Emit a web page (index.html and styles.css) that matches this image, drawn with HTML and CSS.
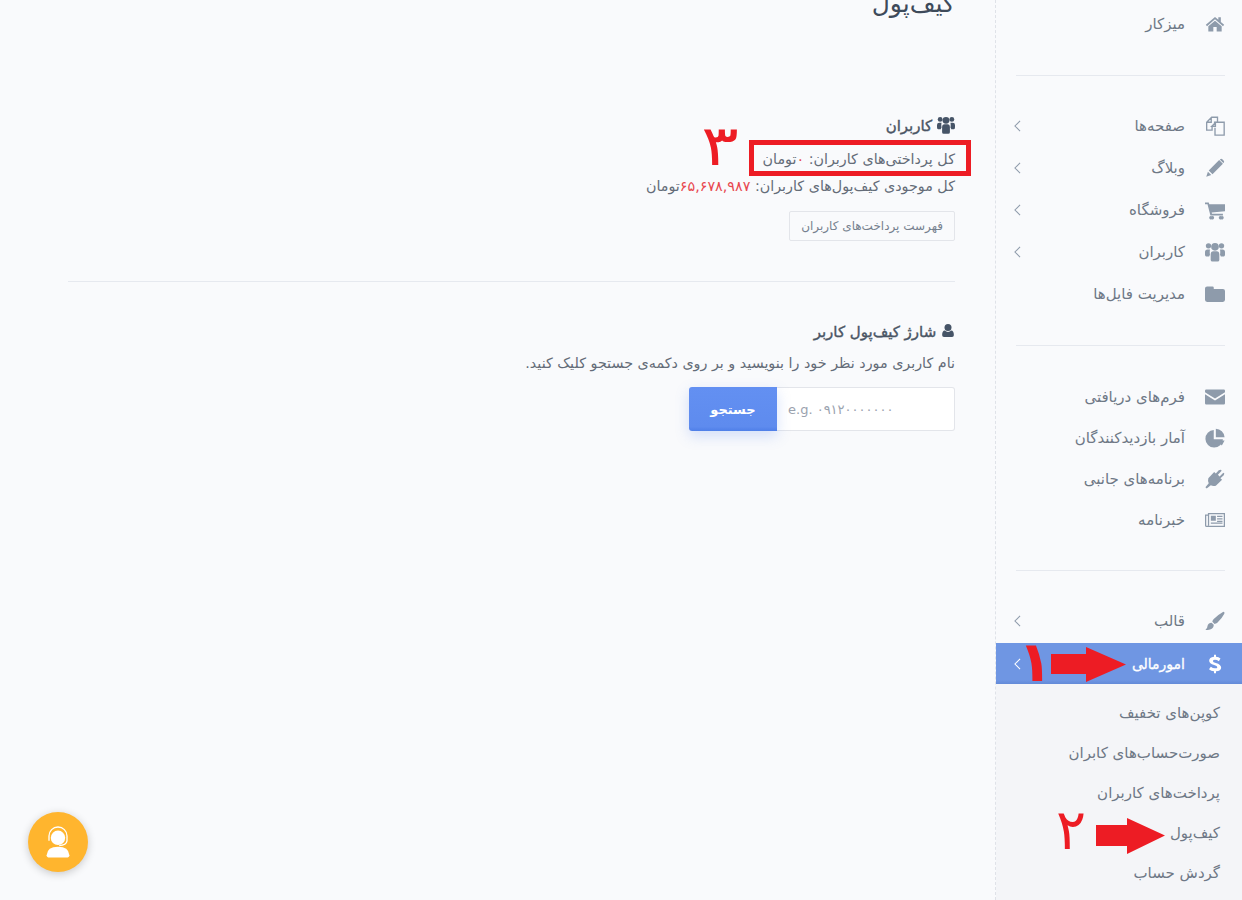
FILE: index.html
```html
<!DOCTYPE html>
<html lang="fa" dir="rtl">
<head>
    <meta charset="UTF-8">
    <title>کیف‌پول</title>
    <link rel="stylesheet" href="styles.css">
</head>
<body>
    <svg class="sprite" xmlns="http://www.w3.org/2000/svg">
        <symbol id="i-home" viewBox="0 0 24 24"><path d="M12 3.5 L1 13 L2.4 14.6 L12 6.4 L21.6 14.6 L23 13 L19 9.5 V4 H16 V6.9 Z M12 8 L4 14.8 V21 H10 V15.5 H14 V21 H20 V14.8 Z"/></symbol>
        <symbol id="i-files" viewBox="0 0 24 24"><path fill="none" stroke="currentColor" stroke-width="1.6" d="M11.5 11 V7.5 L16 7.5 H23 V23 H12 V14 M12.5 8 L8 12.5 H12.5 Z M15 7 V1.5 H8 L2 7.5 V17 H8.5 L8.5 12.5 M7.5 2 V7.5 H2.5"/></symbol>
        <symbol id="i-pencil" viewBox="0 0 24 24"><path d="M17 2.5 L21.5 7 L9 19.5 L4.5 15 Z M3.5 16.5 L7.5 20.5 L1.5 22.5 Z M18.2 1.5 Q19.5 .5 20.8 1.5 L22.5 3.2 Q23.5 4.5 22.5 5.8 L22 6 L18 2 Z"/></symbol>
        <symbol id="i-cart" viewBox="0 0 24 24"><path d="M0 3 H4.5 L5.2 5 H24 V13.5 L8 15 L8.4 16.5 H21.5 V18.5 H6.5 L3 5 H0 Z M8 19.5 A2 2 0 1 1 8 23 A2 2 0 1 1 8 19.5 Z M19.5 19.5 A2 2 0 1 1 19.5 23 A2 2 0 1 1 19.5 19.5 Z"/></symbol>
        <symbol id="i-users" viewBox="0 0 24 24"><circle cx="4.2" cy="4.6" r="3.2"/><circle cx="19.8" cy="4.6" r="3.2"/><circle cx="12" cy="5.8" r="4.6"/><path d="M0 15 V12 Q0 9 3 9 H6 Q5.4 12 6 15.5 Q5 16.5 5 17.5 H1.5 Q0 17.5 0 15 Z M24 15 V12 Q24 9 21 9 H18 Q18.6 12 18 15.5 Q19 16.5 19 17.5 H22.5 Q24 17.5 24 15 Z M6.8 21.5 V15 Q6.8 11 10 11 H14 Q17.2 11 17.2 15 V21.5 Q17.2 23.5 15 23.5 H9 Q6.8 23.5 6.8 21.5 Z"/></symbol>
        <symbol id="i-folder" viewBox="0 0 24 24"><path d="M2.5 3 H9 Q10.5 3 10.5 4.5 V6 H21.5 Q24 6 24 8.5 V19 Q24 21.5 21.5 21.5 H2.5 Q0 21.5 0 19 V5.5 Q0 3 2.5 3 Z"/></symbol>
        <symbol id="i-envelope" viewBox="0 0 24 24"><path d="M1.5 3 H22.5 Q24 3 24 4.5 V6.2 L12 13.8 L0 6.2 V4.5 Q0 3 1.5 3 Z M0 8.6 L12 16.2 L24 8.6 V19.5 Q24 21 22.5 21 H1.5 Q0 21 0 19.5 Z"/></symbol>
        <symbol id="i-pie" viewBox="0 0 24 24"><path d="M10.5 2.5 V13.5 H21.5 A10.5 10.5 0 1 1 10.5 2.5 Z M13 .8 A11 11 0 0 1 23.5 11 H13 Z M14.5 15 H23.5 L20.2 21 Z"/></symbol>
        <symbol id="i-plug" viewBox="0 0 24 24"><path d="M16.5 1.5 L19 .8 L20 2 L15.5 7 L17.5 9 L22 4.5 L23.2 5.5 L22.5 7.5 L18.5 11 L20.5 13 L13 20 Q9.5 21 7 19.5 L2 23.5 L.5 22 L4.5 17 Q3 14.5 4 11 L11 3.5 L13 5.5 Z"/></symbol>
        <symbol id="i-news" viewBox="0 0 24 24"><path fill-rule="evenodd" d="M3.5 3.5 H24 V20.5 H2 Q0 20.5 0 18.5 V5.5 H3.5 Z M5 5 V18 Q5 19 4 19 H22.5 V5 Z M1.5 7 V18.5 Q1.5 19 2.5 19 Q3.5 19 3.5 18.5 V7 Z M7 7 H13 V13 H7 Z M14.5 7 H21 V8.5 H14.5 Z M14.5 10 H21 V11.5 H14.5 Z M14.5 13 H21 V14.5 H14.5 Z M7 15 H21 V16.5 H7 Z"/></symbol>
        <symbol id="i-brush" viewBox="0 0 24 24"><path d="M22 .8 Q24 1 23.2 3.2 Q20.5 8.5 14.5 14.5 Q13 15.5 11.5 15.5 L8.8 12.8 Q9 11 10.5 9.5 Q17 3.5 22 .8 Z M8 14 L10.5 16.5 Q10.5 20.5 7 22 Q3.5 23.5 .5 22.5 Q3 21 3 18 Q3.5 14.5 8 14 Z"/></symbol>
        <symbol id="i-usd" viewBox="0 0 24 24"><path d="M10.8 1 H13.2 V3.4 Q16.6 3.8 18.6 5.4 L16.6 8.6 Q14.4 7 12 7 Q9.5 7 9.5 8.6 Q9.5 9.8 13 10.8 Q19.4 12.6 19.4 16.4 Q19.4 20 13.2 20.8 V23 H10.8 V20.8 Q7.2 20.4 4.8 18.2 L7 15.2 Q9.4 17.2 12 17.2 Q14.8 17.2 14.8 15.8 Q14.8 14.4 11 13.2 Q5 11.4 5 8 Q5 4.2 10.8 3.4 Z"/></symbol>
        <symbol id="i-user" viewBox="0 0 24 24"><circle cx="12" cy="7" r="6"/><path d="M6.5 12 Q9 14.5 12 14.5 Q15 14.5 17.5 12 Q22 12.5 22 19 V20 Q22 23 19 23 H5 Q2 23 2 20 V19 Q2 12.5 6.5 12 Z"/></symbol>
    </svg>

    <div class="layout">
        <aside class="sidebar">
            <ul class="menu menu-first">
                <li class="menu-item"><svg class="icon"><use href="#i-home"/></svg><span>میزکار</span></li>
            </ul>
            <ul class="menu">
                <li class="menu-item"><svg class="icon"><use href="#i-files"/></svg><span>صفحه‌ها</span><svg class="chevron" viewBox="0 0 8 14"><path d="M7 1 L1 7 L7 13"/></svg></li>
                <li class="menu-item"><svg class="icon"><use href="#i-pencil"/></svg><span>وبلاگ</span><svg class="chevron" viewBox="0 0 8 14"><path d="M7 1 L1 7 L7 13"/></svg></li>
                <li class="menu-item"><svg class="icon"><use href="#i-cart"/></svg><span>فروشگاه</span><svg class="chevron" viewBox="0 0 8 14"><path d="M7 1 L1 7 L7 13"/></svg></li>
                <li class="menu-item"><svg class="icon"><use href="#i-users"/></svg><span>کاربران</span><svg class="chevron" viewBox="0 0 8 14"><path d="M7 1 L1 7 L7 13"/></svg></li>
                <li class="menu-item"><svg class="icon"><use href="#i-folder"/></svg><span>مدیریت فایل‌ها</span></li>
            </ul>
            <ul class="menu menu-tight">
                <li class="menu-item"><svg class="icon"><use href="#i-envelope"/></svg><span>فرم‌های دریافتی</span></li>
                <li class="menu-item"><svg class="icon"><use href="#i-pie"/></svg><span>آمار بازدیدکنندگان</span></li>
                <li class="menu-item"><svg class="icon"><use href="#i-plug"/></svg><span>برنامه‌های جانبی</span></li>
                <li class="menu-item"><svg class="icon"><use href="#i-news"/></svg><span>خبرنامه</span></li>
            </ul>
            <ul class="menu menu-last">
                <li class="menu-item"><svg class="icon"><use href="#i-brush"/></svg><span>قالب</span><svg class="chevron" viewBox="0 0 8 14"><path d="M7 1 L1 7 L7 13"/></svg></li>
                <li class="menu-item active"><svg class="icon"><use href="#i-usd"/></svg><span>امورمالی</span><svg class="chevron" viewBox="0 0 8 14"><path d="M7 1 L1 7 L7 13"/></svg></li>
            </ul>
            <ul class="submenu">
                <li>کوپن‌های تخفیف</li>
                <li>صورت‌حساب‌های کابران</li>
                <li>پرداخت‌های کاربران</li>
                <li>کیف‌پول</li>
                <li>گردش حساب</li>
            </ul>
        </aside>

        <main class="content">
            <h1 class="page-title">کیف‌پول</h1>

            <section class="block">
                <h2 class="block-title"><svg class="title-icon"><use href="#i-users"/></svg> کاربران</h2>
                <p class="line">کل پرداختی‌های کاربران: <span class="num">۰</span>تومان</p>
                <p class="line">کل موجودی کیف‌پول‌های کاربران: <span class="num">۶۵,۶۷۸,۹۸۷</span>تومان</p>
                <a class="btn-light">فهرست پرداخت‌های کاربران</a>
            </section>

            <hr class="sep">

            <section class="block block-charge">
                <h2 class="block-title"><svg class="title-icon title-icon-sm"><use href="#i-user"/></svg> شارژ کیف‌پول کاربر</h2>
                <p class="line">نام کاربری مورد نظر خود را بنویسید و بر روی دکمه‌ی جستجو کلیک کنید.</p>
                <form class="search">
                    <input class="search-input" type="text" dir="ltr" placeholder="e.g. ۰۹۱۲۰۰۰۰۰۰۰">
                    <button class="search-btn" type="button">جستجو</button>
                </form>
            </section>
        </main>
    </div>

    <button class="support" type="button" aria-label="پشتیبانی">
        <svg viewBox="0 0 30 30"><path d="M15 19 Q24 19 24.5 26 Q24.5 28 22 28 H8 Q5.5 28 5.5 26 Q6 19 15 19 Z"/><circle cx="15" cy="11.5" r="6"/><path fill="none" stroke="#fff" stroke-width="1.1" d="M7.5 14 V10 A7.5 7.5 0 0 1 22.5 10 V14 Q22 17.5 16 18"/></svg>
    </button>

    <!-- red notes drawn over the screenshot -->
    <div class="note-box"></div>
    <span class="note note-3">۳</span>
    <span class="note note-1">۱</span>
    <span class="note note-2">۲</span>
    <svg class="arrow arrow-1" viewBox="0 0 76 36"><path d="M1 7 H36 V0 L76 17.5 L36 35 V27 H1 Z"/></svg>
    <svg class="arrow arrow-2" viewBox="0 0 70 36"><path d="M1 7 H32 V0 L70 17.5 L32 36 V28 H1 Z"/></svg>
</body>
</html>
```

FILE: styles.css
```css
html, body {
    height: 900px;
    margin: 0;
    overflow: hidden;
}
body {
    font-family: "DejaVu Sans", "Noto Sans", sans-serif;
    font-size: 14px;
    color: #646c78;
    background-color: #f9fafc;
    position: relative;
}
.sprite {
    display: none;
}
.layout {
    display: flex;
    height: 900px;
}

/* sidebar */
.sidebar {
    width: 247px;
    flex: none;
    box-sizing: border-box;
    border-left: 1px dashed #dfe2e8;
}
.menu {
    list-style: none;
    margin: 0 17px 0 20px;
    padding: 29px 0 30px;
    border-bottom: 1px solid #e6e9ef;
}
.menu-first {
    padding: 3px 0 30px;
}
.menu-tight {
    padding: 30px 0 30px;
}
.menu-tight .menu-item {
    height: 41px;
}
.menu-last {
    border-bottom: 0;
    margin: 0;
    padding: 29px 0 0;
}
.menu-item {
    height: 42px;
    display: flex;
    align-items: center;
    color: #6e7886;
    font-size: 15px;
}
.menu-item .icon {
    width: 20px;
    height: 20px;
    flex: none;
    margin-left: 20px;
    fill: #8e9bab;
    color: #8e9bab;
}
.menu-item .chevron {
    width: 7px;
    height: 12px;
    margin-right: auto;
    margin-left: -2px;
    fill: none;
    stroke: #8e9bab;
    stroke-width: 1.2;
}
.menu-last .menu-item {
    padding: 0 17px 0 20px;
}
.menu-item.active {
    height: 41px;
    margin-top: 1px;
    color: #fff;
    font-size: 14px;
    -webkit-text-stroke: 0.3px #fff;
    background: linear-gradient(#6f96e3, #6f96e3 90%, #638ad8);
}
.menu-item.active .icon {
    fill: #fff;
}
.menu-item.active .chevron {
    stroke: #fff;
}
.submenu {
    list-style: none;
    margin: 0;
    padding: 9px 22px 0 0;
    background-color: #f4f5f8;
    height: 216px;
    font-size: 15px;
    color: #6e7886;
}
.submenu li {
    height: 40px;
    line-height: 40px;
}

/* content */
.content {
    flex: 1;
    padding: 0 40px 0 68px;
    min-width: 0;
}
.page-title {
    margin: -14px 0 0;
    font-size: 25px;
    line-height: 36px;
    font-weight: normal;
    color: #3e4a5a;
}
.block-title {
    margin: 0 0 8px;
    font-size: 15px;
    line-height: 24px;
    font-weight: normal;
    -webkit-text-stroke: 0.4px #4a5564;
    color: #4a5564;
}
.title-icon {
    width: 18px;
    height: 18px;
    fill: #465467;
    vertical-align: -3px;
}
.title-icon-sm {
    width: 14px;
    height: 15px;
    vertical-align: -1px;
}
.block {
    margin-top: 92px;
}
.block-charge {
    margin-top: 38px;
}
.block-charge .block-title {
    margin-bottom: 6px;
}
.line {
    margin: 0;
    line-height: 27px;
    font-size: 14.3px;
    color: #646c78;
}
.num {
    color: #e8484f;
}
.btn-light {
    display: inline-block;
    box-sizing: border-box;
    height: 30px;
    line-height: 28px;
    padding: 0 11px;
    margin-top: 11px;
    border: 1px solid #e3e5ea;
    border-radius: 2px;
    font-size: 12px;
    color: #76818f;
}
.sep {
    height: 1px;
    border: 0;
    margin: 40px 0 0;
    background-color: #e6e9ef;
}
.search {
    display: flex;
    margin-top: 10px;
}
.search-input {
    width: 178px;
    height: 44px;
    box-sizing: border-box;
    padding: 0 11px;
    border: 1px solid #e3e5ea;
    border-left: 0;
    border-radius: 0 3px 3px 0;
    background: #fff;
    font-family: inherit;
    font-size: 13px;
    color: #5d6878;
    outline: none;
}
.search-input::placeholder {
    color: #9aa2ae;
}
.search-btn {
    width: 88px;
    height: 44px;
    border: 0;
    border-radius: 3px 0 0 3px;
    background: linear-gradient(#6390f2, #5e8bee 90%, #4f7fe8);
    box-shadow: 0 5px 14px rgba(94, 139, 238, 0.25);
    color: #fff;
    font-family: inherit;
    font-size: 13px;
    font-weight: bold;
}

/* support button */
.support {
    position: absolute;
    left: 28px;
    top: 812px;
    width: 60px;
    height: 60px;
    padding: 12px;
    border: 0;
    border-radius: 50%;
    background-color: #ffb52e;
    box-shadow: 0 2px 8px rgba(0, 0, 0, 0.2);
}
.support svg {
    display: block;
    width: 36px;
    height: 36px;
    fill: #fff;
}

/* red notes */
.note-box {
    position: absolute;
    left: 749px;
    top: 140px;
    width: 222px;
    height: 36px;
    box-sizing: border-box;
    border: 5px solid #ed1c24;
}
.note {
    position: absolute;
    color: #ed1c24;
    font-family: "DejaVu Sans", sans-serif;
    font-size: 56px;
    line-height: 60px;
}
.note-3 {
    left: 705px;
    top: 116px;
    transform: scaleX(1.25);
}
.note-1 {
    left: 1018px;
    top: 632px;
    font-weight: bold;
}
.note-2 {
    left: 1056px;
    top: 800px;
}
.arrow {
    position: absolute;
    fill: #ed1c24;
}
.arrow-1 {
    left: 1050px;
    top: 647px;
    width: 76px;
    height: 36px;
}
.arrow-2 {
    left: 1095px;
    top: 818px;
    width: 70px;
    height: 36px;
}
```
